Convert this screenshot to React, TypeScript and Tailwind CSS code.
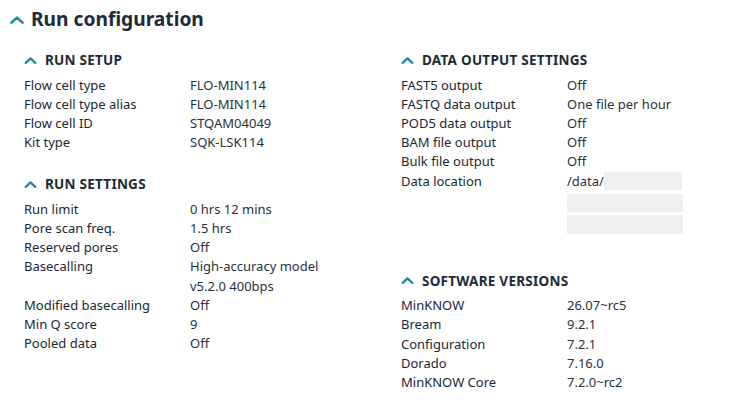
import React from 'react';

type Row = { label: string; value: React.ReactNode };

function Chevron({ className }: { className: string }) {
  return (
    <svg viewBox="0 0 12 7" className={className} fill="none">
      <path d="M1.2 5.8L6 1.4L10.8 5.8" stroke="currentColor" strokeWidth="2.3" strokeLinecap="round" strokeLinejoin="round" />
    </svg>
  );
}

function Section({ title, rows, className = '' }: { title: string; rows: Row[]; className?: string }) {
  return (
    <section className={className}>
      <div className="flex h-[20px] items-center gap-[8px]">
        <Chevron className="h-[7px] w-[13px] text-[#1b8aa8]" />
        <h3 className="text-[13.5px] font-bold uppercase tracking-[0.25px] text-[#1d2b38]">{title}</h3>
      </div>
      <dl className="mt-[5.5px]">
        {rows.map((r) => (
          <div key={r.label} className="grid grid-cols-[166px_1fr] text-[13px] leading-[19.2px]">
            <dt className="text-[#1a2835]">{r.label}</dt>
            <dd className="text-[#26323c]">{r.value}</dd>
          </div>
        ))}
      </dl>
    </section>
  );
}

const runSetup: Row[] = [
  { label: 'Flow cell type', value: 'FLO-MIN114' },
  { label: 'Flow cell type alias', value: 'FLO-MIN114' },
  { label: 'Flow cell ID', value: 'STQAM04049' },
  { label: 'Kit type', value: 'SQK-LSK114' },
];

const runSettings: Row[] = [
  { label: 'Run limit', value: '0 hrs 12 mins' },
  { label: 'Pore scan freq.', value: '1.5 hrs' },
  { label: 'Reserved pores', value: 'Off' },
  {
    label: 'Basecalling',
    value: (
      <>
        High-accuracy model
        <br />
        v5.2.0 400bps
      </>
    ),
  },
  { label: 'Modified basecalling', value: 'Off' },
  { label: 'Min Q score', value: '9' },
  { label: 'Pooled data', value: 'Off' },
];

const dataOutput: Row[] = [
  { label: 'FAST5 output', value: 'Off' },
  { label: 'FASTQ data output', value: 'One file per hour' },
  { label: 'POD5 data output', value: 'Off' },
  { label: 'BAM file output', value: 'Off' },
  { label: 'Bulk file output', value: 'Off' },
  {
    label: 'Data location',
    value: (
      <div className="flex flex-col gap-[3px]">
        <div className="flex items-center">
          <span>/data/</span>
          <span className="h-[18px] w-[78px] bg-[#eeeff0]" />
        </div>
        <span className="h-[18px] w-[116px] bg-[#eeeff0]" />
        <span className="h-[19px] w-[116px] bg-[#eeeff0]" />
      </div>
    ),
  },
];

const versions: Row[] = [
  { label: 'MinKNOW', value: '26.07~rc5' },
  { label: 'Bream', value: '9.2.1' },
  { label: 'Configuration', value: '7.2.1' },
  { label: 'Dorado', value: '7.16.0' },
  { label: 'MinKNOW Core', value: '7.2.0~rc2' },
];

export default function App() {
  return (
    <div className="h-[411px] w-[754px] overflow-hidden bg-white font-['Noto_Sans',sans-serif]">
      <header className="box-content flex h-[28px] items-center gap-[7px] pl-[10px] pt-[5px]">
        <Chevron className="mt-[1px] h-[8px] w-[14px] text-[#1b8aa8]" />
        <h2 className="text-[19.2px] font-bold leading-[28px] text-[#1d2b38]">Run configuration</h2>
      </header>

      <div className="mt-[17px] grid grid-cols-[377px_1fr] pl-[24px]">
        <div>
          <Section title="Run setup" rows={runSetup} />
          <Section title="Run settings" rows={runSettings} className="mt-[22px]" />
        </div>
        <div>
          <Section title="Data output settings" rows={dataOutput} />
          <Section title="Software versions" rows={versions} className="mt-[37px]" />
        </div>
      </div>
    </div>
  );
}
